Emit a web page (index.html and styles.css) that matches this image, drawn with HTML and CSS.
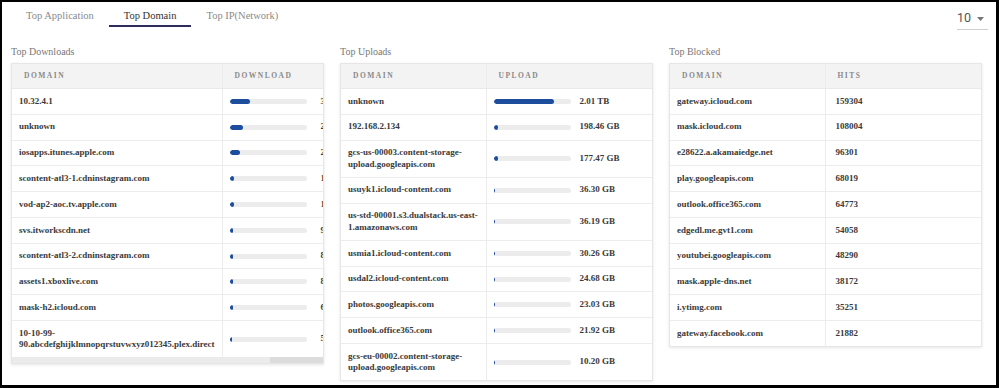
FILE: index.html
```html
<!DOCTYPE html>
<html lang="en">
<head>
    <meta charset="UTF-8">
    <meta name="viewport" content="width=device-width, initial-scale=1.0">
    <title>Top Domain</title>
    <link rel="stylesheet" href="styles.css">
</head>
<body>
    <div class="frame">
        <div class="topbar">
            <div class="tabs">
                <div class="tab">Top Application</div>
                <div class="tab active">Top Domain</div>
                <div class="tab">Top IP(Network)</div>
            </div>
            <div class="select">
                <span>10</span>
                <svg class="caret" width="7" height="4" viewBox="0 0 7 4"><path d="M0 0h7L3.5 4z" fill="#757575"/></svg>
            </div>
        </div>

        <div class="panels">
            <!-- downloads -->
            <div class="panel">
                <div class="panel-title">Top Downloads</div>
                <div class="table-box">
                    <div class="table-scroll">
                        <table class="data wide">
                            <colgroup><col style="width: 210px"><col></colgroup>
                            <thead>
                                <tr><th>Domain</th><th>Download</th></tr>
                            </thead>
                            <tbody>
                                <tr><td>10.32.4.1</td><td class="bar-cell"><div class="bar-wrap loose"><div class="bar"><div class="fill" style="width: 26%"></div></div><span>3.12 TB</span></div></td></tr>
                                <tr><td>unknown</td><td class="bar-cell"><div class="bar-wrap loose"><div class="bar"><div class="fill" style="width: 18%"></div></div><span>2.45 TB</span></div></td></tr>
                                <tr><td>iosapps.itunes.apple.com</td><td class="bar-cell"><div class="bar-wrap loose"><div class="bar"><div class="fill" style="width: 14%"></div></div><span>2.07 TB</span></div></td></tr>
                                <tr><td>scontent-atl3-1.cdninstagram.com</td><td class="bar-cell"><div class="bar-wrap loose"><div class="bar"><div class="fill" style="width: 6%"></div></div><span>1.36 TB</span></div></td></tr>
                                <tr><td>vod-ap2-aoc.tv.apple.com</td><td class="bar-cell"><div class="bar-wrap loose"><div class="bar"><div class="fill" style="width: 6%"></div></div><span>1.02 TB</span></div></td></tr>
                                <tr><td>svs.itworkscdn.net</td><td class="bar-cell"><div class="bar-wrap loose"><div class="bar"><div class="fill" style="width: 5%"></div></div><span>912.40 GB</span></div></td></tr>
                                <tr><td>scontent-atl3-2.cdninstagram.com</td><td class="bar-cell"><div class="bar-wrap loose"><div class="bar"><div class="fill" style="width: 5%"></div></div><span>845.21 GB</span></div></td></tr>
                                <tr><td>assets1.xboxlive.com</td><td class="bar-cell"><div class="bar-wrap loose"><div class="bar"><div class="fill" style="width: 5%"></div></div><span>803.77 GB</span></div></td></tr>
                                <tr><td>mask-h2.icloud.com</td><td class="bar-cell"><div class="bar-wrap loose"><div class="bar"><div class="fill" style="width: 4%"></div></div><span>612.35 GB</span></div></td></tr>
                                <tr><td>10-10-99-<br>90.abcdefghijklmnopqrstuvwxyz012345.plex.direct</td><td class="bar-cell"><div class="bar-wrap loose"><div class="bar"><div class="fill" style="width: 3%"></div></div><span>540.18 GB</span></div></td></tr>
                            </tbody>
                        </table>
                    </div>
                    <div class="hscroll"><div class="hscroll-thumb"></div></div>
                </div>
            </div>

            <!-- uploads -->
            <div class="panel">
                <div class="panel-title">Top Uploads</div>
                <div class="table-box">
                    <table class="data">
                        <colgroup><col style="width: 145px"><col></colgroup>
                        <thead>
                            <tr><th>Domain</th><th>Upload</th></tr>
                        </thead>
                        <tbody>
                            <tr><td>unknown</td><td class="bar-cell"><div class="bar-wrap"><div class="bar"><div class="fill" style="width: 78%"></div></div><span>2.01 TB</span></div></td></tr>
                            <tr><td>192.168.2.134</td><td class="bar-cell"><div class="bar-wrap"><div class="bar"><div class="fill" style="width: 6%"></div></div><span>198.46 GB</span></div></td></tr>
                            <tr><td>gcs-us-00003.content-storage-upload.googleapis.com</td><td class="bar-cell"><div class="bar-wrap"><div class="bar"><div class="fill" style="width: 6%"></div></div><span>177.47 GB</span></div></td></tr>
                            <tr><td>usuyk1.icloud-content.com</td><td class="bar-cell"><div class="bar-wrap"><div class="bar"><div class="fill" style="width: 2%"></div></div><span>36.30 GB</span></div></td></tr>
                            <tr><td>us-std-00001.s3.dualstack.us-east-1.amazonaws.com</td><td class="bar-cell"><div class="bar-wrap"><div class="bar"><div class="fill" style="width: 2%"></div></div><span>36.19 GB</span></div></td></tr>
                            <tr><td>usmia1.icloud-content.com</td><td class="bar-cell"><div class="bar-wrap"><div class="bar"><div class="fill" style="width: 2%"></div></div><span>30.26 GB</span></div></td></tr>
                            <tr><td>usdal2.icloud-content.com</td><td class="bar-cell"><div class="bar-wrap"><div class="bar"><div class="fill" style="width: 1.5%"></div></div><span>24.68 GB</span></div></td></tr>
                            <tr><td>photos.googleapis.com</td><td class="bar-cell"><div class="bar-wrap"><div class="bar"><div class="fill" style="width: 1.5%"></div></div><span>23.03 GB</span></div></td></tr>
                            <tr><td>outlook.office365.com</td><td class="bar-cell"><div class="bar-wrap"><div class="bar"><div class="fill" style="width: 1.5%"></div></div><span>21.92 GB</span></div></td></tr>
                            <tr><td>gcs-eu-00002.content-storage-upload.googleapis.com</td><td class="bar-cell"><div class="bar-wrap"><div class="bar"><div class="fill" style="width: 1%"></div></div><span>10.20 GB</span></div></td></tr>
                        </tbody>
                    </table>
                </div>
            </div>

            <!-- blocked -->
            <div class="panel">
                <div class="panel-title">Top Blocked</div>
                <div class="table-box">
                    <table class="data">
                        <colgroup><col style="width: 155px"><col></colgroup>
                        <thead>
                            <tr><th>Domain</th><th>Hits</th></tr>
                        </thead>
                        <tbody>
                            <tr><td>gateway.icloud.com</td><td>159304</td></tr>
                            <tr><td>mask.icloud.com</td><td>108004</td></tr>
                            <tr><td>e28622.a.akamaiedge.net</td><td>96301</td></tr>
                            <tr><td>play.googleapis.com</td><td>68019</td></tr>
                            <tr><td>outlook.office365.com</td><td>64773</td></tr>
                            <tr><td>edgedl.me.gvt1.com</td><td>54058</td></tr>
                            <tr><td>youtubei.googleapis.com</td><td>48290</td></tr>
                            <tr><td>mask.apple-dns.net</td><td>38172</td></tr>
                            <tr><td>i.ytimg.com</td><td>35251</td></tr>
                            <tr><td>gateway.facebook.com</td><td>21882</td></tr>
                        </tbody>
                    </table>
                </div>
            </div>
        </div>
    </div>
</body>
</html>
```

FILE: styles.css
```css
* {
    margin: 0;
    padding: 0;
    box-sizing: border-box;
}

body {
    font-family: 'Liberation Serif', 'Times New Roman', serif;
    background: #fff;
    color: #333;
}

.frame {
    width: 999px;
    height: 388px;
    border-style: solid;
    border-color: #000;
    border-width: 2px 3px 3px 2px;
    background: #fff;
    overflow: hidden;
}

/* top bar */
.topbar {
    display: flex;
    justify-content: space-between;
    align-items: flex-start;
}

.tabs {
    display: flex;
    margin-left: 9px;
    padding-top: 7px;
}

.tab {
    font-size: 10.5px;
    line-height: 14px;
    padding: 0 15px 2px;
    color: #8a8a8a;
    border-bottom: 2px solid transparent;
}

.tab.active {
    color: #333;
    border-bottom-color: #2e2c5c;
}

.select {
    display: flex;
    align-items: center;
    gap: 6px;
    width: 31px;
    margin-right: 8px;
    padding: 9px 0 4px;
    font-family: Roboto, 'Liberation Sans', sans-serif;
    font-size: 12.5px;
    line-height: 14px;
    color: #555;
    border-bottom: 1px solid #cfcfcf;
}

.caret {
    margin-top: 1px;
}

/* panels */
.panels {
    display: grid;
    grid-template-columns: repeat(3, 313px);
    gap: 16px;
    padding: 15px 0 0 9px;
}

.panel-title {
    font-size: 10px;
    line-height: 14px;
    color: #777;
    margin-bottom: 4px;
}

.table-box {
    border: 1px solid #e6e6e6;
    box-shadow: 0 1px 3px rgba(0, 0, 0, 0.1);
    background: #fff;
}

.table-scroll {
    overflow: hidden;
}

.data {
    width: 100%;
    border-collapse: collapse;
    table-layout: fixed;
}

.data.wide {
    width: 378px;
}

.data th {
    background: #f3f3f3;
    color: #8a8a8a;
    font-size: 7.5px;
    font-weight: bold;
    letter-spacing: 1.5px;
    text-transform: uppercase;
    text-align: left;
    line-height: 10px;
    padding: 7px 10px 7px 12px;
    border-bottom: 1px solid #e8e8e8;
}

.data td {
    font-size: 9px;
    font-weight: bold;
    color: #3a3a3a;
    line-height: 11.5px;
    padding: 6.6px 7px 6.7px;
    border-bottom: 1px solid #ececec;
    vertical-align: middle;
}

.data tbody tr:last-child td {
    border-bottom: none;
}

.data th + th,
.data td + td {
    border-left: 1px solid #ececec;
}

.data td + td {
    padding-left: 10px;
}

.data td.bar-cell {
    padding-left: 7px;
}

.bar-wrap {
    display: flex;
    align-items: center;
    gap: 9px;
    white-space: nowrap;
}

.bar-wrap.loose {
    gap: 14px;
}

.bar {
    width: 77px;
    height: 5px;
    border-radius: 3px;
    background: #ececec;
    overflow: hidden;
    flex-shrink: 0;
}

.fill {
    height: 100%;
    border-radius: 3px;
    background: #1d4e9e;
}

.hscroll {
    height: 6px;
    background: #dcdcdc;
}

.hscroll-thumb {
    width: 83%;
    height: 100%;
    background: #ebebeb;
}
```
